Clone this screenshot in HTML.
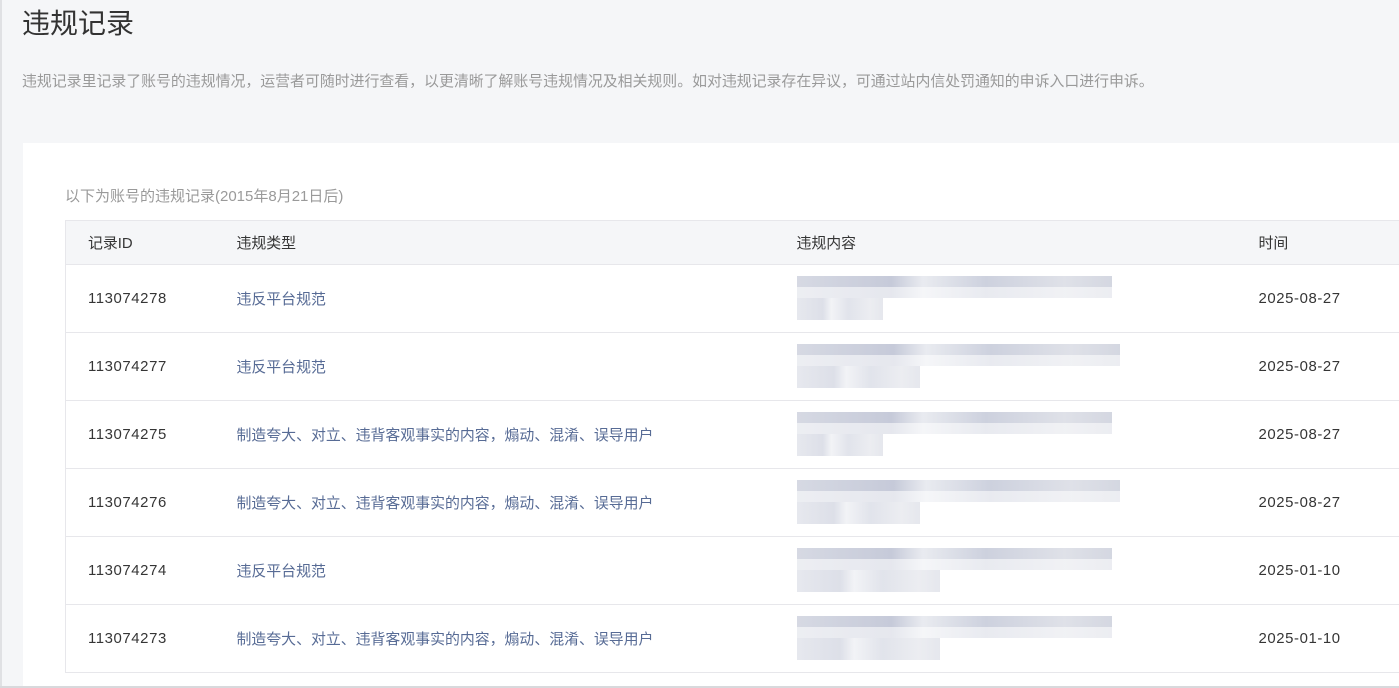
<!DOCTYPE html>
<html><head><meta charset="utf-8"><style>
*{margin:0;padding:0;box-sizing:border-box}
body{width:1399px;height:688px;overflow:hidden;background:#f5f6f8;font-family:"Liberation Sans","Noto Sans CJK SC",sans-serif;position:relative}
.lb{position:absolute;left:0;top:0;width:2px;height:688px;background:#e0e1e4}
.bb{position:absolute;left:0;top:686px;width:1399px;height:2px;background:#d8d9dc}
h1{position:absolute;left:22px;top:5px;font-size:28px;font-weight:normal;color:#333;line-height:38px}
.desc{position:absolute;left:22px;top:72px;font-size:14.9px;color:#9a9a9a;line-height:20px}
.card{position:absolute;left:23px;top:143px;width:1376px;height:543px;background:#fff}
.cap{position:absolute;left:65px;top:187px;font-size:15px;color:#9a9a9a;line-height:20px}
table{position:absolute;left:65px;top:220px;width:1340px;border-collapse:collapse;font-size:14.9px}
th{background:#f5f6f8;height:44px;text-align:left;font-weight:normal;color:#353535;border-top:1px solid #e7e7eb;border-bottom:1px solid #e7e7eb}
td{height:68px;border-bottom:1px solid #e7e7eb;color:#353535;vertical-align:middle}
.n{letter-spacing:.6px}
tr td:first-child,tr th:first-child{border-left:1px solid #e7e7eb;padding-left:22px}
a{color:#576b95;text-decoration:none}
.bl{position:relative;height:46px;width:330px}
.bl i{position:absolute;display:block;background:linear-gradient(90deg,#d6d9e3,#c6cad9 30%,#e9ebf0 40%,#cdd1de 60%,#dfe1e8 85%,#d4d7e1)}
</style></head><body>
<div class="lb"></div>
<h1>违规记录</h1>
<div class="desc">违规记录里记录了账号的违规情况，运营者可随时进行查看，以更清晰了解账号违规情况及相关规则。如对违规记录存在异议，可通过站内信处罚通知的申诉入口进行申诉。</div>
<div class="card"></div>
<div class="cap">以下为账号的违规记录(2015年8月21日后)</div>
<table>
<colgroup><col style="width:171px"><col style="width:560px"><col style="width:462px"><col></colgroup>
<tr><th>记录ID</th><th>违规类型</th><th>违规内容</th><th>时间</th></tr>
<tr><td class="n">113074278</td><td><a>违反平台规范</a></td><td><div class="bl"><i style="left:0;top:0;width:315px;height:11px"></i><i style="left:0;top:11px;width:315px;height:11px;opacity:.45"></i><i style="left:0;top:22px;width:86px;height:22px;opacity:.6"></i></div></td><td class="n">2025-08-27</td></tr>
<tr><td class="n">113074277</td><td><a>违反平台规范</a></td><td><div class="bl"><i style="left:0;top:0;width:323px;height:11px"></i><i style="left:0;top:11px;width:323px;height:11px;opacity:.45"></i><i style="left:0;top:22px;width:123px;height:22px;opacity:.6"></i></div></td><td class="n">2025-08-27</td></tr>
<tr><td class="n">113074275</td><td><a>制造夸大、对立、违背客观事实的内容，煽动、混淆、误导用户</a></td><td><div class="bl"><i style="left:0;top:0;width:315px;height:11px"></i><i style="left:0;top:11px;width:315px;height:11px;opacity:.45"></i><i style="left:0;top:22px;width:86px;height:22px;opacity:.6"></i></div></td><td class="n">2025-08-27</td></tr>
<tr><td class="n">113074276</td><td><a>制造夸大、对立、违背客观事实的内容，煽动、混淆、误导用户</a></td><td><div class="bl"><i style="left:0;top:0;width:323px;height:11px"></i><i style="left:0;top:11px;width:323px;height:11px;opacity:.45"></i><i style="left:0;top:22px;width:123px;height:22px;opacity:.6"></i></div></td><td class="n">2025-08-27</td></tr>
<tr><td class="n">113074274</td><td><a>违反平台规范</a></td><td><div class="bl"><i style="left:0;top:0;width:315px;height:11px"></i><i style="left:0;top:11px;width:315px;height:11px;opacity:.45"></i><i style="left:0;top:22px;width:143px;height:22px;opacity:.6"></i></div></td><td class="n">2025-01-10</td></tr>
<tr><td class="n">113074273</td><td><a>制造夸大、对立、违背客观事实的内容，煽动、混淆、误导用户</a></td><td><div class="bl"><i style="left:0;top:0;width:315px;height:11px"></i><i style="left:0;top:11px;width:315px;height:11px;opacity:.45"></i><i style="left:0;top:22px;width:143px;height:22px;opacity:.6"></i></div></td><td class="n">2025-01-10</td></tr>
</table>
<div class="bb"></div>
</body></html>
